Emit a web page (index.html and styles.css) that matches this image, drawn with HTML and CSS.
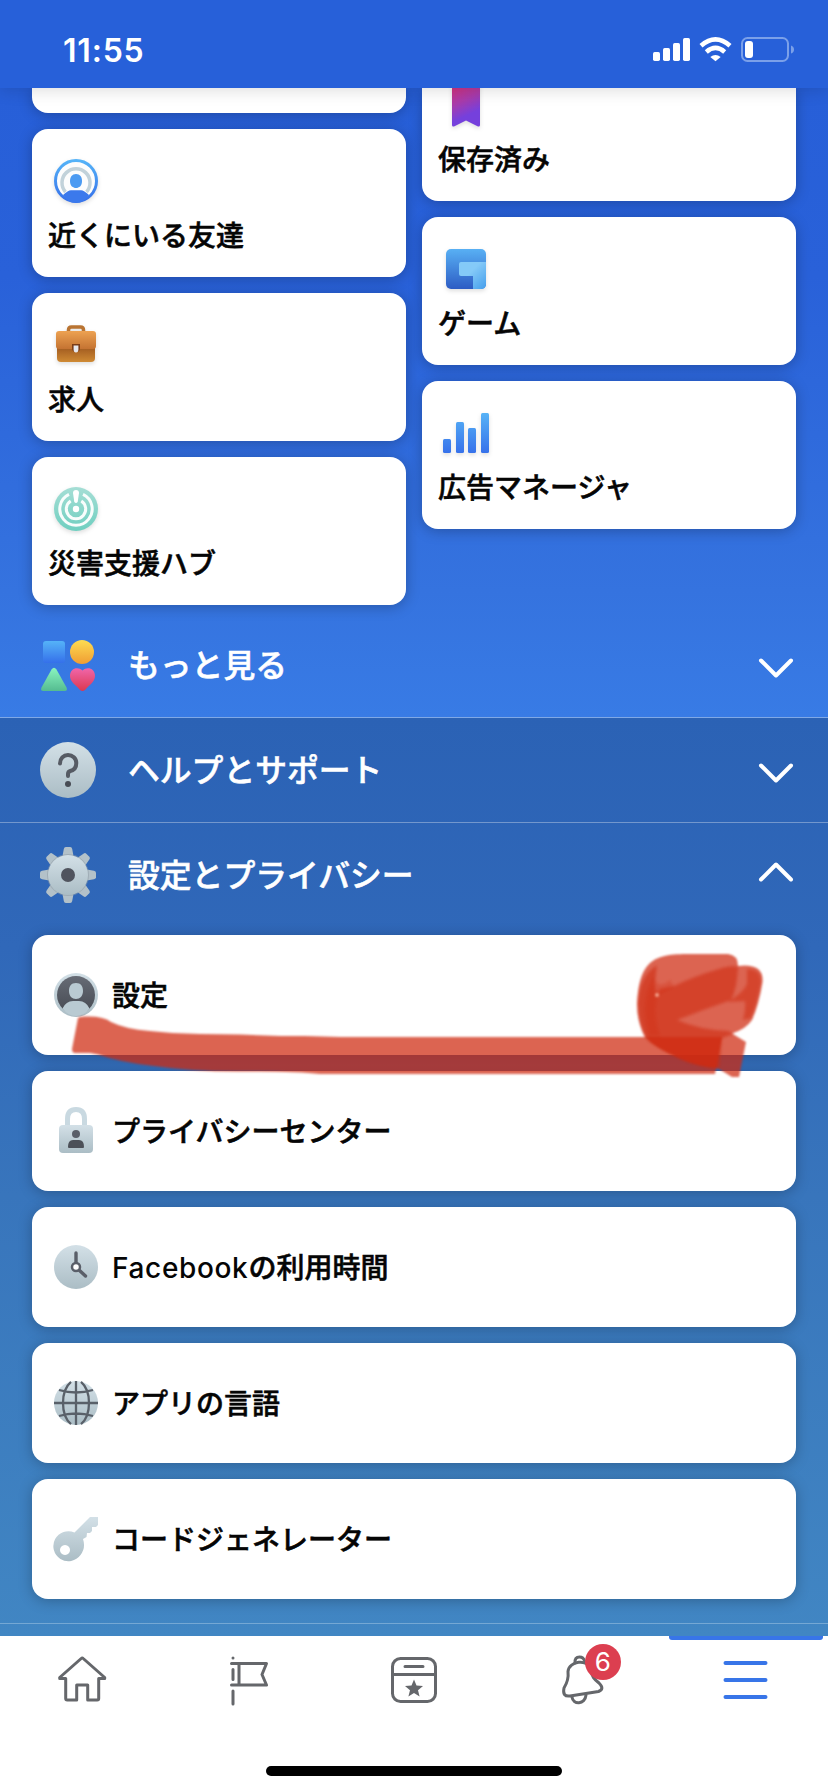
FILE: index.html
```html
<!DOCTYPE html>
<html lang="ja">
<head>
<meta charset="utf-8">
<title>メニュー</title>
<link rel="stylesheet" href="styles.css">
</head>
<body>
<svg class="defs" width="0" height="0" aria-hidden="true">
  <defs>
    <linearGradient id="blue" x1="0" y1="0" x2="0" y2="1"><stop offset="0" stop-color="#55b3f8"/><stop offset="1" stop-color="#3570ea"/></linearGradient>
    <linearGradient id="blueTall" gradientUnits="userSpaceOnUse" x1="0" y1="0" x2="0" y2="44"><stop offset="0" stop-color="#58b6f7"/><stop offset="1" stop-color="#356eea"/></linearGradient>
    <linearGradient id="gray" x1="0" y1="0" x2="0" y2="1"><stop offset="0" stop-color="#d3e0e7"/><stop offset="1" stop-color="#abbdc5"/></linearGradient>
    <linearGradient id="dark" x1="0" y1="0" x2="0" y2="1"><stop offset="0" stop-color="#666b75"/><stop offset="1" stop-color="#464a52"/></linearGradient>
    <linearGradient id="mint" x1="0" y1="0" x2="0" y2="1"><stop offset="0" stop-color="#a5ded5"/><stop offset="1" stop-color="#6fcfc0"/></linearGradient>
    <linearGradient id="game" x1="0" y1="0" x2="0" y2="1"><stop offset="0" stop-color="#58b0f4"/><stop offset="1" stop-color="#2d5cc4"/></linearGradient>
    <linearGradient id="gameLight" x1="0" y1="0" x2="1" y2="1"><stop offset=".4" stop-color="#84caf8"/><stop offset="1" stop-color="#459eec"/></linearGradient>
    <linearGradient id="ribbon" x1=".3" y1="0" x2=".6" y2="1"><stop offset="0" stop-color="#d4327c"/><stop offset=".4" stop-color="#a83bab"/><stop offset=".75" stop-color="#7540dc"/></linearGradient>
    <linearGradient id="caseTop" x1="0" y1="0" x2="0" y2="1"><stop offset="0" stop-color="#eda252"/><stop offset="1" stop-color="#c47332"/></linearGradient>
    <linearGradient id="caseBase" x1="0" y1="0" x2="0" y2="1"><stop offset="0" stop-color="#944d1a"/><stop offset="1" stop-color="#cf8a34"/></linearGradient>
    <linearGradient id="yellow" x1="0" y1="0" x2="0" y2="1"><stop offset="0" stop-color="#fddc52"/><stop offset="1" stop-color="#f09d33"/></linearGradient>
    <linearGradient id="green" x1="0" y1="0" x2="0" y2="1"><stop offset="0" stop-color="#8af5bf"/><stop offset="1" stop-color="#55bb90"/></linearGradient>
    <linearGradient id="pink" x1="0" y1="0" x2="0" y2="1"><stop offset="0" stop-color="#f066aa"/><stop offset="1" stop-color="#dc3850"/></linearGradient>
  </defs>
</svg>

<header class="status">
  <span class="clock">11:55</span>
  <svg class="indicators" width="144" height="28" viewBox="0 0 144 28">
    <g fill="#fff">
      <rect x="3" y="16" width="7" height="9" rx="1.7"/><rect x="13" y="12" width="7" height="13" rx="1.7"/>
      <rect x="23" y="7" width="7" height="18" rx="1.7"/><rect x="33" y="2" width="7" height="23" rx="1.7"/>
      <path d="M60.300 21Q65.500 17 70.700 21L65.500 25.300Z"/>
    </g>
    <g fill="none" stroke="#fff" stroke-width="4.600"><path d="M51 9.700Q65.500-2.900 80 9.700"/><path d="M56.300 15.900Q65.500 7.900 74.700 15.900"/></g>
    <rect x="92" y="2" width="46" height="23" rx="5.500" fill="none" stroke="#7ba0e9" stroke-width="2"/>
    <path d="M141 9.500q3 1 3 4t-3 4z" fill="#7ba0e9"/>
    <rect x="95" y="5" width="8" height="17" rx="3" fill="#fff"/>
  </svg>
</header>

<main class="menu">
  <section class="explore">
    <div class="tiles">
      <div class="column">
        <div class="tile tile-cut"></div>
        <div class="tile">
          <svg class="tile-icon" viewBox="0 0 44 44">
            <circle cx="22" cy="22" r="20.500" fill="#fdfdfd" stroke="url(#blue)" stroke-width="3"/>
            <path d="M11.500 33A14 14 0 1 1 32.500 33" fill="none" stroke="#c2d2da" stroke-width="3.500"/>
            <path d="M22 15c4 0 6 3 6 7 0 5-3 7-6 7s-6-2-6-7c0-4 2-7 6-7z" fill="#4c9bf2"/>
            <path d="M9 36q5-4.700 8-4.700h10q3 0 8 4.700-5 8-13 8T9 36z" fill="#3b79ec"/>
          </svg>
          <span>近くにいる友達</span>
        </div>
        <div class="tile">
          <svg class="tile-icon" viewBox="0 0 44 44">
            <path d="M14.500 10V7q0-3 3-3h9q3 0 3 3v3" fill="none" stroke="#b97432" stroke-width="3.500"/>
            <rect x="3" y="20" width="38" height="19" rx="4" fill="url(#caseBase)"/>
            <path d="M2 11q0-3 3-3h34q3 0 3 3v12q0 3-3 3H5q-3 0-3-3z" fill="url(#caseTop)"/>
            <path d="M18 21h8v4q0 4-4 4t-4-4z" fill="#7a3c17"/><path d="M19.600 22.500h4.800v4q0 3-2.400 3t-2.400-3z" fill="#e7e8ee"/>
          </svg>
          <span>求人</span>
        </div>
        <div class="tile">
          <svg class="tile-icon" viewBox="0 0 44 44">
            <circle cx="22" cy="22" r="22" fill="url(#mint)"/>
            <g fill="none" stroke="#f8fdfc" stroke-width="3"><path d="M15 7.400A16.200 16.200 0 1 0 29 7.400"/><path d="M16.700 14A9.700 9.700 0 1 0 27.300 14"/></g>
            <path d="M19 6q0-3 3-3t3 3l-1.300 9q-1.700 2-3.400 0z" fill="#fff"/><circle cx="22" cy="22" r="3.200" fill="#fff"/>
          </svg>
          <span>災害支援ハブ</span>
        </div>
      </div>
      <div class="column">
        <div class="tile tile-partial">
          <svg class="tile-icon" viewBox="0 0 44 44"><path d="M8 0h28v42q0 2-2 1.500L22 37.500 10 43.500q-2 .5-2-1.500z" fill="url(#ribbon)"/></svg>
          <span>保存済み</span>
        </div>
        <div class="tile">
          <svg class="tile-icon" viewBox="0 0 44 44">
            <rect x="2" y="2" width="40" height="40" rx="5" fill="url(#game)"/>
            <path d="M17 15h25v22q0 5-5 5h-8V29H17q-2 0-2-2V17q0-2 2-2z" fill="url(#gameLight)"/>
          </svg>
          <span>ゲーム</span>
        </div>
        <div class="tile">
          <svg class="tile-icon" viewBox="0 0 44 44"><g fill="url(#blueTall)"><rect x="-1" y="28" width="8" height="14" rx="1.500"/><rect x="12" y="11" width="8" height="31" rx="1.500"/><rect x="24" y="17" width="8" height="25" rx="1.500"/><rect x="37" y="2" width="8" height="40" rx="1.500"/></g></svg>
          <span>広告マネージャ</span>
        </div>
      </div>
    </div>
    <div class="row row-more">
      <svg class="row-icon" viewBox="0 0 56 56">
        <rect x="3" y="3" width="22" height="22" rx="3" fill="url(#blue)"/><circle cx="42" cy="14" r="12" fill="url(#yellow)"/>
        <path d="M11.500 31.500q2.500-3.500 5 0l10 18q1.500 3.500-2 3.500h-21q-3.500 0-2-3.500z" fill="url(#green)"/>
        <path d="M42.500 32.500C38 28 30 30 30 38c0 6 6 9 10 14q2.500 2 5 0c4-5 10-8 10-14 0-8-8-10-12.500-5.500z" fill="url(#pink)"/>
      </svg>
      <span>もっと見る</span>
      <svg class="chevron" viewBox="0 0 36 22"><path d="M3 3.500 18 18.500 33 3.500"/></svg>
    </div>
  </section>

  <section class="options">
    <div class="row">
      <svg class="row-icon" viewBox="0 0 56 56"><circle cx="28" cy="28" r="28" fill="url(#gray)"/><path d="M20 21.500c0-5 3.500-8.500 8-8.500s8.300 3.200 8.300 8-3 7.300-6 8q-2.300.7-2.300 3v2" fill="none" stroke="#565b64" stroke-width="4" stroke-linecap="round"/><circle cx="28" cy="42" r="3" fill="#484c54"/></svg>
      <span>ヘルプとサポート</span>
      <svg class="chevron" viewBox="0 0 36 22"><path d="M3 3.500 18 18.500 33 3.500"/></svg>
    </div>
    <div class="row row-settings">
      <svg class="row-icon" viewBox="0 0 56 56">
        <defs><path id="tooth" d="M22 12 23.800 2q.4-2 2-2h4.400q1.600 0 2 2L34 12z"/></defs>
        <g fill="#b3c1c9"><use href="#tooth"/><use href="#tooth" transform="rotate(45 28 28)"/><use href="#tooth" transform="rotate(90 28 28)"/><use href="#tooth" transform="rotate(135 28 28)"/><use href="#tooth" transform="rotate(180 28 28)"/><use href="#tooth" transform="rotate(225 28 28)"/><use href="#tooth" transform="rotate(270 28 28)"/><use href="#tooth" transform="rotate(315 28 28)"/></g>
        <circle cx="28" cy="28" r="21" fill="#8f9da6" opacity=".55"/>
        <circle cx="28" cy="28" r="20" fill="url(#gray)"/><circle cx="28" cy="28" r="7" fill="#50545e"/>
      </svg>
      <span>設定とプライバシー</span>
      <svg class="chevron chevron-up" viewBox="0 0 36 22"><path d="M3 18.500 18 3.500 33 18.500"/></svg>
    </div>
    <div class="list">
      <div class="item">
        <svg class="item-icon" viewBox="0 0 44 44"><circle cx="22" cy="22" r="22" fill="url(#gray)"/><circle cx="22" cy="22" r="19" fill="url(#dark)"/><path d="M22 10c5 0 7 3.500 7 8 0 5-3 8-7 8s-7-3-7-8c0-4.500 2-8 7-8zM8.500 35.500Q12 28 19 28h6q7 0 10.500 7.500Q30 43 22 43T8.500 35.500z" fill="#b9cad2"/></svg>
        <span>設定</span>
      </div>
      <div class="item">
        <svg class="item-icon" viewBox="0 0 44 44"><path d="M13.500 18V10q0-9.500 8.500-9.500T30.500 10v8" fill="none" stroke="#c9d9e1" stroke-width="5"/><rect x="5" y="16" width="34" height="28" rx="4" fill="url(#gray)"/><circle cx="22" cy="25" r="4" fill="#5a5f69"/><path d="M14 38q0-7 5-7h6q5 0 5 7 0 1-1 1H15q-1 0-1-1z" fill="#4c5058"/></svg>
        <span>プライバシーセンター</span>
      </div>
      <div class="item">
        <svg class="item-icon" viewBox="0 0 44 44"><circle cx="22" cy="22" r="22" fill="url(#gray)"/><g stroke="#5a5f69" fill="none" stroke-width="3.400"><path d="M22 18V8M25 25l6.500 6" stroke-linecap="round"/><circle cx="22" cy="22" r="4" fill="#fff" stroke-width="2.500"/></g></svg>
        <span><span class="latin">Facebook</span>の利用時間</span>
      </div>
      <div class="item">
        <svg class="item-icon" viewBox="0 0 44 44"><circle cx="22" cy="22" r="22" fill="url(#gray)"/><g stroke="#596069" fill="none" stroke-width="2.300"><path d="M22 0v44M0 22h44M5 9q17 5 34 0M5 35q17-5 34 0"/><path d="M17 .8C12 5 9 13 9 22s3 17 8 21.200M27 .8C32 5 35 13 35 22s-3 17-8 21.200"/></g></svg>
        <span>アプリの言語</span>
      </div>
      <div class="item">
        <svg class="item-icon" viewBox="0 0 44 44"><path fill-rule="evenodd" d="M20.500 15.500 36 0h8v8l-2 2h-4v4l-2 2h-3l-.5 4L29 22q3 9-2.500 16A15 15 0 1 1 20.500 15.500zM11 28a5 5 0 1 0 .01 0z" fill="url(#gray)"/></svg>
        <span>コードジェネレーター</span>
      </div>
    </div>
  </section>

  <svg class="marker" width="720" height="150" viewBox="55 940 720 150">
    <g fill="#cf2b10">
      <path opacity=".73" d="M78 1018Q79 1016 87 1016.500 103 1016 111 1022 125 1029 150 1031 175 1034 200 1034L240 1034.500 280 1036H305L340 1037H722L715 1074H320Q295 1071 245 1071.500 195 1072 150 1065.500 120 1062 98 1054.500L90 1053H75Q72 1053 72 1049Z"/>
      <path opacity=".73" d="M637 1004C638 985 641 972 649 964 659 954 676 954 692 954H728Q738 955 738 966Q764 963 762.500 982 759 1004 752 1020 746 1029 732 1033.500L746 1042 739 1077H732L719 1069Q695 1066 678 1058 657 1049 645 1037 637 1022 637 1004Z"/>
      <g class="overlap">
        <path opacity=".6" d="M638 1003C640 984 644 974 657 965L655 981Q654 988 657 994L660 989 674 986Q695 976 719 969 731 965 738 967 737 989 731 1000 705 1009 677 1020 700 1030 728 1031L734 1034Q727 1036 722 1038L719 1068Q690 1066 673 1054 649 1045 645 1036 638 1020 638 1003Z"/>
        <path opacity=".55" d="M747 969Q761 969 761 982 757 1006 751 1018L743 1020Q746 1009 745 1001L728 1002Q744 992 747 984Z"/>
        <path opacity=".3" d="M654 976Q657 991 670 980L674 987 658 995Q652 1010 660 1036L649 1036Q639 1000 654 976Z"/>
      </g>
    </g>
    <circle cx="657" cy="995" r="2" fill="#f3a28c"/>
  </svg>
</main>

<nav class="tabs">
  <a class="tab"><svg viewBox="0 0 56 56"><path d="M26.200 6.500 4.700 25.500v1h6v20q0 1.500 1.500 1.500h9.500v-15h11v15h9.500q1.500 0 1.500-1.500v-20h6v-1L28.200 6.500q-1-1-2 0z"/></svg></a>
  <a class="tab"><svg viewBox="0 0 56 56"><path d="M13 6v0M13 17.500v10M13 39v13M11.500 11.500h35l-4.500 11 4.500 10.500h-35M19 11.500V33"/></svg></a>
  <a class="tab"><svg viewBox="0 0 56 56"><rect x="6.500" y="6.500" width="43" height="43" rx="8"/><path d="M6.500 22.500h43M19 14.500h18"/><path class="solid" d="m28 27.500 2.500 6 6.500.5-5 4.200 1.600 6.300-5.600-3.400-5.600 3.400 1.600-6.300-5-4.200 6.500-.5z"/></svg></a>
  <a class="tab"><svg viewBox="0 0 56 56"><path d="M23 11q-.5-6 4.500-6 4 0 5 4M20 45c1 8 13 8 14-2"/><path d="M16 19.500C17 9 36 6 39 18c1 7 3 9 8 13q6 6-.5 8.500L18 44q-8 1-6-8 5-8 4-16.500z"/></svg><b class="badge">6</b></a>
  <a class="tab tab-active"><svg viewBox="0 0 56 56"><path d="M8.500 11h40M8.500 28h40M8.500 45h40"/></svg></a>
  <i class="home-bar"></i>
</nav>
</body>
</html>
```
FILE: styles.css
```css
* { box-sizing: border-box; }

body {
  margin: 0;
  width: 828px;
  height: 1792px;
  display: flex;
  flex-direction: column;
  overflow: hidden;
  background: #fff;
  color: #050505;
  font: 500 28px/40px Inter, "Noto Sans CJK JP", sans-serif;
}

svg { display: block; overflow: visible; }
.defs { position: absolute; }

.status {
  flex: none;
  height: 88px;
  padding: 36px 34px 0 63px;
  display: flex;
  justify-content: space-between;
  background: #2760d9;
  color: #fff;
  z-index: 1;
  box-shadow: 0 2px 16px rgba(0, 0, 0, .14);
}
.clock { font-size: 32px; line-height: 29px; font-weight: 600; letter-spacing: .8px; }

.menu { position: relative; flex: none; height: 1548px; overflow: hidden; }

.explore {
  height: 630px;
  background: linear-gradient(#275fd8, #2961d9 30%, #3573df 80%, #387be5);
  border-bottom: 1px solid #7fa8e6;
}
.tiles { display: flex; gap: 16px; padding: 0 32px; height: 525px; }
.column { flex: 1; display: flex; flex-direction: column; gap: 16px; }
.tile, .item { background: #fff; border-radius: 16px; box-shadow: 0 2px 14px rgba(0, 0, 0, .25); }
.tile { height: 148px; padding: 30px 16px 0; }
.tile-cut { height: 25px; padding: 0; border-radius: 0 0 16px 16px; }
.tile-partial { height: 113px; padding-top: 0; border-radius: 0 0 16px 16px; }
.tile-partial .tile-icon { margin-top: -5px; }
.tile-icon {
  width: 44px;
  height: 44px;
  margin: 0 0 13px 6px;
  filter: drop-shadow(0 2px 2px rgba(0, 0, 0, .13));
}
.tile span { display: block; }
.tile span, .item span, .row span { -webkit-text-stroke: .55px currentColor; }
.item > span { padding-top: 2px; }
.item .latin { letter-spacing: .65px; -webkit-text-stroke-width: 0; }

.row {
  height: 105px;
  padding: 0 34px 0 40px;
  display: flex;
  align-items: center;
  color: #fff;
  font-size: 31.800px;
}
.row span { flex: 1; padding-top: 1px; }
.row-icon { width: 56px; height: 56px; margin-right: 32px; }
.chevron {
  width: 36px;
  height: 22px;
  margin-top: 5px;
  fill: none;
  stroke: #fff;
  stroke-width: 4;
  stroke-linecap: round;
  stroke-linejoin: round;
}
.chevron-up { margin-top: -6px; }

.options { height: 918px; background: linear-gradient(#2b62b5, #3068b9 25%, #3875bc 52%, #4186c3); }
.options .row:first-child { border-bottom: 1px solid #7397cd; }
.row-settings { height: 104px; }
.list {
  display: flex;
  flex-direction: column;
  gap: 16px;
  padding: 8px 32px 24px;
  border-bottom: 1px solid #75a8d4;
}
.item { height: 120px; padding-left: 22px; display: flex; align-items: center; gap: 14px; }
.item-icon { width: 44px; height: 44px; }

/* Pen annotation drawn over the settings entry */
.marker { position: absolute; left: 55px; top: 852px; filter: blur(.8px); }
.overlap { filter: blur(1px); }

.tabs { position: relative; flex: 1; display: flex; background: #fff; }
.tab { position: relative; flex: 1; display: flex; justify-content: center; padding-top: 16px; }
.tab svg {
  width: 56px;
  height: 56px;
  fill: none;
  stroke: #65676b;
  stroke-width: 3;
  stroke-linecap: round;
  stroke-linejoin: round;
}
.tab .solid { fill: #65676b; stroke: none; }
.badge {
  position: absolute;
  left: 88px;
  top: 8px;
  width: 36px;
  height: 36px;
  border-radius: 50%;
  background: #dc3f50;
  color: #fff;
  font-size: 26px;
  font-weight: 400;
  line-height: 36px;
  text-align: center;
}
.tab-active svg { stroke: #3875e8; stroke-width: 4; }
.tab-active::before {
  content: "";
  position: absolute;
  top: 0;
  left: 7px;
  width: 154px;
  height: 4px;
  border-radius: 0 0 3px 3px;
  background: #3875e8;
}
.home-bar {
  position: absolute;
  left: 266px;
  bottom: 16px;
  width: 296px;
  height: 10px;
  border-radius: 5px;
  background: #000;
}
```
